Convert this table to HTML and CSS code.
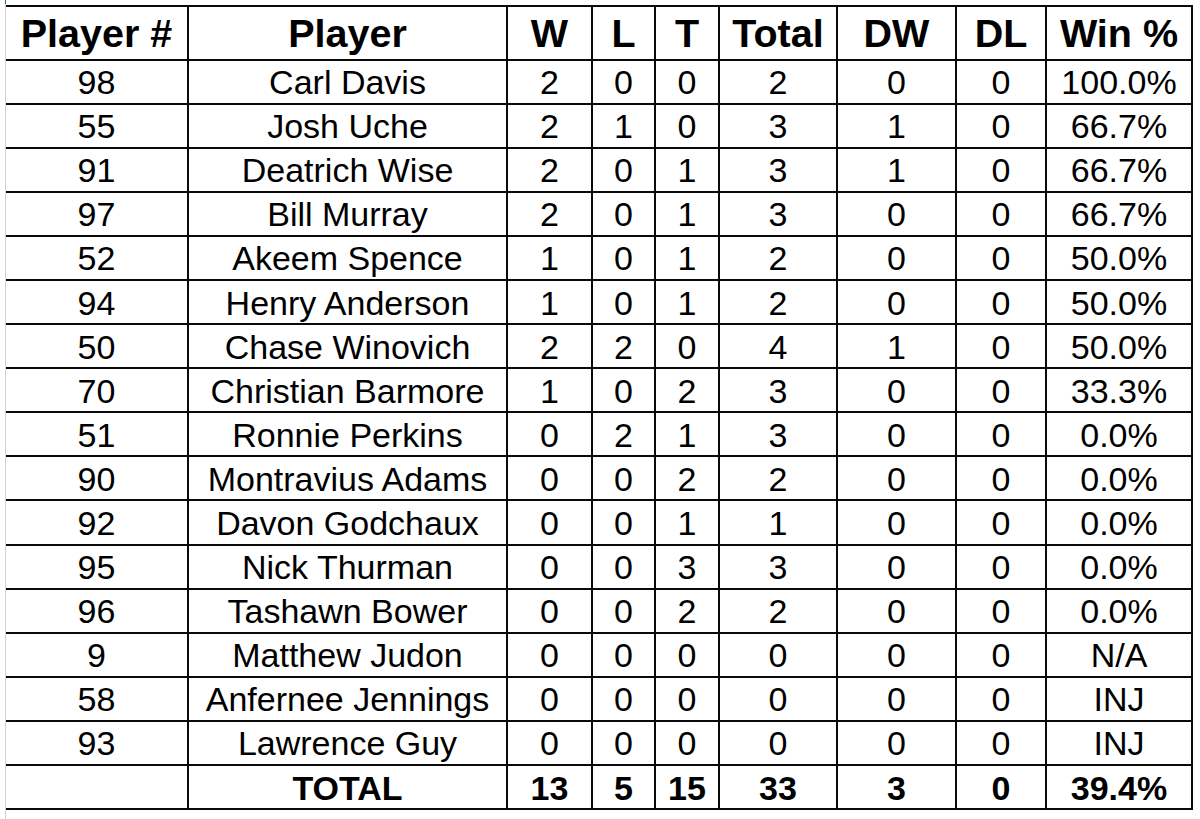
FILE: index.html
```html
<!DOCTYPE html>
<html lang="en">
<head>
<meta charset="utf-8">
<title>Player Stats</title>
<link rel="stylesheet" href="styles.css">
</head>
<body>
<div class="sheet">
  <table class="stats">
    <colgroup>
      <col class="c-num">
      <col class="c-name">
      <col class="c-w">
      <col class="c-l">
      <col class="c-t">
      <col class="c-total">
      <col class="c-dw">
      <col class="c-dl">
      <col class="c-pct">
    </colgroup>
    <thead>
      <tr><th>Player #</th><th>Player</th><th>W</th><th>L</th><th>T</th><th>Total</th><th>DW</th><th>DL</th><th>Win %</th></tr>
    </thead>
    <tbody>
      <tr><td>98</td><td>Carl Davis</td><td>2</td><td>0</td><td>0</td><td>2</td><td>0</td><td>0</td><td>100.0%</td></tr>
      <tr><td>55</td><td>Josh Uche</td><td>2</td><td>1</td><td>0</td><td>3</td><td>1</td><td>0</td><td>66.7%</td></tr>
      <tr><td>91</td><td>Deatrich Wise</td><td>2</td><td>0</td><td>1</td><td>3</td><td>1</td><td>0</td><td>66.7%</td></tr>
      <tr><td>97</td><td>Bill Murray</td><td>2</td><td>0</td><td>1</td><td>3</td><td>0</td><td>0</td><td>66.7%</td></tr>
      <tr><td>52</td><td>Akeem Spence</td><td>1</td><td>0</td><td>1</td><td>2</td><td>0</td><td>0</td><td>50.0%</td></tr>
      <tr><td>94</td><td>Henry Anderson</td><td>1</td><td>0</td><td>1</td><td>2</td><td>0</td><td>0</td><td>50.0%</td></tr>
      <tr><td>50</td><td>Chase Winovich</td><td>2</td><td>2</td><td>0</td><td>4</td><td>1</td><td>0</td><td>50.0%</td></tr>
      <tr><td>70</td><td>Christian Barmore</td><td>1</td><td>0</td><td>2</td><td>3</td><td>0</td><td>0</td><td>33.3%</td></tr>
      <tr><td>51</td><td>Ronnie Perkins</td><td>0</td><td>2</td><td>1</td><td>3</td><td>0</td><td>0</td><td>0.0%</td></tr>
      <tr><td>90</td><td>Montravius Adams</td><td>0</td><td>0</td><td>2</td><td>2</td><td>0</td><td>0</td><td>0.0%</td></tr>
      <tr><td>92</td><td>Davon Godchaux</td><td>0</td><td>0</td><td>1</td><td>1</td><td>0</td><td>0</td><td>0.0%</td></tr>
      <tr><td>95</td><td>Nick Thurman</td><td>0</td><td>0</td><td>3</td><td>3</td><td>0</td><td>0</td><td>0.0%</td></tr>
      <tr><td>96</td><td>Tashawn Bower</td><td>0</td><td>0</td><td>2</td><td>2</td><td>0</td><td>0</td><td>0.0%</td></tr>
      <tr><td>9</td><td>Matthew Judon</td><td>0</td><td>0</td><td>0</td><td>0</td><td>0</td><td>0</td><td>N/A</td></tr>
      <tr><td>58</td><td>Anfernee Jennings</td><td>0</td><td>0</td><td>0</td><td>0</td><td>0</td><td>0</td><td>INJ</td></tr>
      <tr><td>93</td><td>Lawrence Guy</td><td>0</td><td>0</td><td>0</td><td>0</td><td>0</td><td>0</td><td>INJ</td></tr>
    </tbody>
    <tfoot>
      <tr><td></td><td>TOTAL</td><td>13</td><td>5</td><td>15</td><td>33</td><td>3</td><td>0</td><td>39.4%</td></tr>
    </tfoot>
  </table>
</div>
</body>
</html>
```

FILE: styles.css
```css
html, body {
  margin: 0;
  padding: 0;
  background: #ffffff;
}

body {
  font-family: "Liberation Sans", Arial, sans-serif;
  color: #000;
}

.sheet {
  margin-left: 5px;
  padding-top: 5px;
  min-height: 814px;
  border-left: 1px solid #d2d2d2;
  border-image: linear-gradient(to bottom, #1f7a45 0, #1f7a45 5px, #d2d2d2 5px, #d2d2d2 100%) 1;
}

.stats {
  border-collapse: collapse;
  table-layout: fixed;
  width: 1186px;
}

.c-num   { width: 182px; }
.c-name  { width: 319px; }
.c-w     { width: 85px; }
.c-l     { width: 63px; }
.c-t     { width: 64px; }
.c-total { width: 118px; }
.c-dw    { width: 119px; }
.c-dl    { width: 90px; }
.c-pct   { width: 146px; }

.stats th,
.stats td {
  border: 2px solid #0a0a0a;
  text-align: center;
  vertical-align: middle;
  padding: 2px 0 0 0;
  white-space: nowrap;
  overflow: hidden;
}

.stats tr > :first-child {
  border-left: none;
}

.stats th {
  font-size: 39.5px;
  font-weight: bold;
  height: 49.5px;
}

.stats td {
  font-size: 34px;
  height: 40.1px;
}

.stats tfoot td {
  font-weight: bold;
}
```
